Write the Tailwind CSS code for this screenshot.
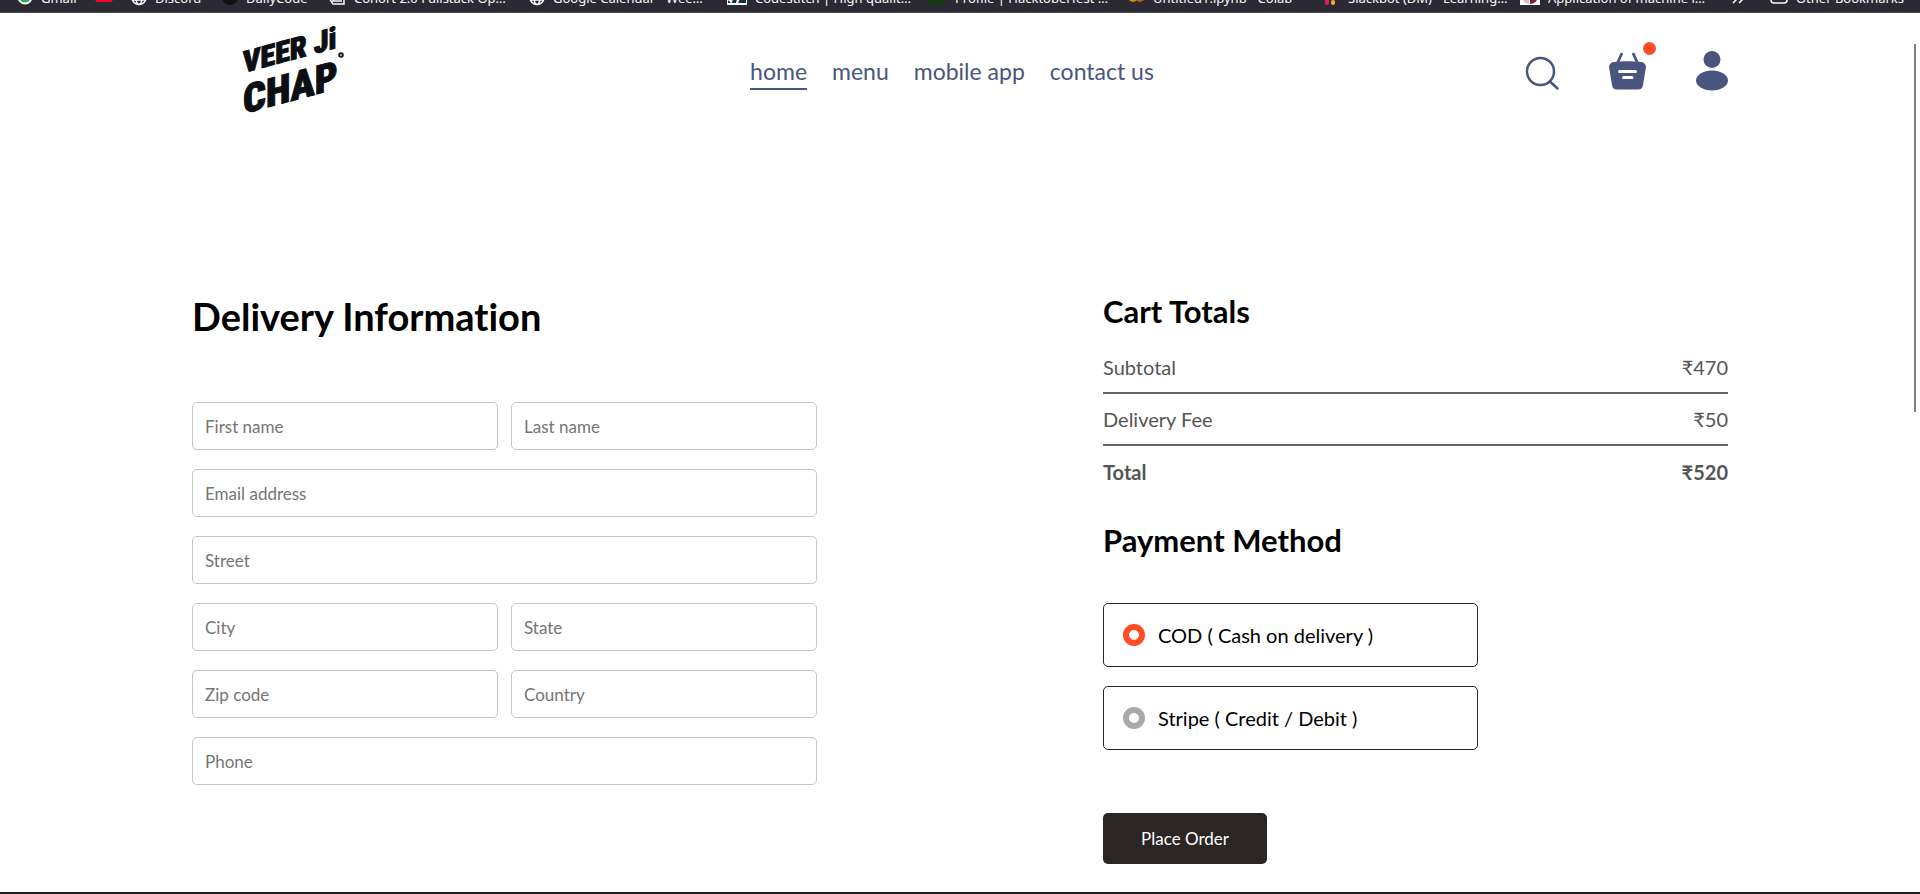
<!DOCTYPE html>
<html lang="en">
<head>
<meta charset="utf-8">
<meta name="viewport" content="width=device-width, initial-scale=1">
<title>Veer Ji Chap - Place Order</title>
<script src="https://cdn.jsdelivr.net/npm/@tailwindcss/browser@4"></script>
</head>
<body class="relative overflow-x-hidden bg-white font-[Lato,'Noto_Sans',sans-serif] text-black [font-variant-ligatures:none]">

<!-- Bookmarks strip -->
<nav aria-label="Bookmarks" class="flex h-[13px] items-end overflow-hidden border-b border-[#4a4953] bg-[#2b2a33] pr-4 pb-1.5 pl-[17px] font-['Noto_Sans',sans-serif] text-[13px] leading-4 whitespace-nowrap text-[#fbfbfe]">
  <a href="#" class="flex w-[78px] shrink-0 gap-2"><svg class="size-4 shrink-0" viewBox="0 0 16 16"><circle cx="8" cy="7" r="7.5" fill="#fff"/><circle cx="8" cy="7" r="5.5" fill="#34a853"/></svg>Gmail</a>
  <a href="#" aria-label="YouTube" class="flex w-9 shrink-0"><svg class="h-4 w-[18px]" viewBox="0 0 18 16"><rect y="1" width="18" height="11" rx="3" fill="#ff0033"/></svg></a>
  <a href="#" class="flex w-[91px] shrink-0 gap-2"><svg class="size-4 shrink-0" viewBox="0 0 16 16" fill="none" stroke="#fbfbfe" stroke-width="1.5"><circle cx="8" cy="7.5" r="7"/><ellipse cx="8" cy="7.5" rx="3" ry="7"/><path d="M1 5h14M1 10h14"/></svg>Discord</a>
  <a href="#" class="flex w-[106px] shrink-0 gap-2"><svg class="size-4 shrink-0" viewBox="0 0 16 16"><circle cx="8" cy="7" r="8" fill="#111"/></svg>DailyCode</a>
  <a href="#" class="flex w-[201px] shrink-0 gap-2 pr-5"><svg class="h-4 w-[18px] shrink-0" viewBox="0 0 18 16" fill="none" stroke="#fbfbfe" stroke-width="1.5"><path d="M1 8l4 6h11V2H5v9h9M7 8h5"/></svg><span class="truncate">Cohort 2.0 Fullstack Open</span></a>
  <a href="#" class="flex w-[198px] shrink-0 gap-2 pr-5"><svg class="size-4 shrink-0" viewBox="0 0 16 16" fill="none" stroke="#fbfbfe" stroke-width="1.5"><circle cx="8" cy="7.5" r="7"/><ellipse cx="8" cy="7.5" rx="3" ry="7"/><path d="M1 5h14M1 10h14"/></svg><span class="truncate">Google Calendar - Week of</span></a>
  <a href="#" class="flex w-[200px] shrink-0 gap-2 pr-4"><svg class="h-4 w-5 shrink-0" viewBox="0 0 20 16"><path fill="#fff" d="M0 0h20v15H0z"/><path fill="#123047" d="M8 0h11v13H5zM1 10l3 3H1z"/><path fill="#fff" d="M10 9h3l-2 4H9z"/></svg><span class="truncate">Codestitch | High quality web</span></a>
  <a href="#" class="flex w-[202px] shrink-0 gap-2 pr-4"><svg class="h-4 w-5 shrink-0" viewBox="0 0 20 16"><path fill="#183717" d="M0 0h19v15H0z"/></svg><span class="truncate">Profile | Hacktoberfest 2024</span></a>
  <a href="#" class="flex w-[195px] shrink-0 gap-2 pr-4"><svg class="size-4 shrink-0" viewBox="0 0 16 16" fill="none" stroke-width="3"><circle cx="4" cy="7" r="3.5" stroke="#c98a1a"/><circle cx="11" cy="7" r="3.5" stroke="#b8651a"/></svg><span class="truncate">Untitled1.ipynb - Colab</span></a>
  <a href="#" class="flex w-[196px] shrink-0 gap-2 pr-3"><svg class="size-4 shrink-0" viewBox="0 0 16 16"><rect x="1" width="4" height="15" rx="2" fill="#e01e5a"/><rect x="7" y="10" width="4" height="5" rx="2" fill="#ecb22e"/></svg><span class="truncate">Slackbot (DM) - Learning hub</span></a>
  <a href="#" class="flex w-[198px] shrink-0 gap-2 pr-3"><svg class="h-4 w-5 shrink-0" viewBox="0 0 20 16"><path fill="#fff" d="M0 0h20v15H0z"/><path fill="#7a1f3d" d="M10 6h8a8 8 0 0 1-8 8z"/><path fill="#d8c3cc" d="M9 6v8a8 8 0 0 1-7-6z"/></svg><span class="truncate">Application of machine learning</span></a>
  <button type="button" aria-label="More bookmarks" class="ml-3"><svg class="h-4 w-4" viewBox="0 0 16 16" fill="none" stroke="#fbfbfe" stroke-width="1.5"><path d="M3 5l4 4-4 4M9 5l4 4-4 4"/></svg></button>
  <a href="#" class="ml-auto flex shrink-0 gap-2"><svg class="h-4 w-[18px] shrink-0" viewBox="0 0 18 16" fill="none" stroke="#fbfbfe" stroke-width="1.5"><path d="M1 1v9a3 3 0 0 0 3 3h10a3 3 0 0 0 3-3V1"/></svg>Other Bookmarks</a>
</nav>

<header class="flex h-[116px] items-center justify-between px-[10%]">
  <a href="#" aria-label="Veer Ji Chap" class="w-[187px]">
    <svg class="h-[116px] w-[187px]" viewBox="0 0 187 116" fill="#0b0f14" stroke="#0b0f14" font-family="'Roboto Condensed','Open Sans Condensed',Roboto,sans-serif" font-weight="900">
      <g transform="translate(51 0) skewY(-15)">
        <text x="0" y="60" font-size="30" stroke-width="1">VEER Ji</text>
        <text x="0" y="101" font-size="40" stroke-width="1">CHAP</text>
      </g>
      <circle cx="149" cy="42" r="2" fill="#8aa0b5" stroke-width="1.5"/>
    </svg>
  </a>
  <nav aria-label="Main" class="flex gap-[25px] pt-1 text-[23px] leading-[30px] text-[#49557e]">
    <a href="#" class="border-b-2 border-[#49557e] pb-0.5">home</a>
    <a href="#">menu</a>
    <a href="#">mobile app</a>
    <a href="#">contact us</a>
  </nav>
  <div class="flex items-center gap-[50px] text-[#49557e]">
    <button type="button" aria-label="Search" class="pt-1"><svg class="size-[34px]" viewBox="0 0 34 34" fill="none" stroke="currentColor" stroke-width="2.5" stroke-linecap="round"><circle cx="15.5" cy="15.5" r="13.5"/><path d="M25 25.5l7.5 7"/></svg></button>
    <a href="#" aria-label="Cart" class="relative"><svg class="h-[38px] w-[37px]" viewBox="0 0 37 38"><path fill="currentColor" d="M5 10C12 9 25 9 32 10a5 5 0 0 1 5 5l-3 18a5 5 0 0 1-5 4.500H8A5 5 0 0 1 3 33L0 15a5 5 0 0 1 5-5z"/><path d="M8.500 11l4.500-10M28.500 11l-4.500-10" stroke="currentColor" stroke-width="2.8"/><path d="M10.500 19.500h16M14.500 25.500h8.500" stroke="#fff" stroke-width="3" stroke-linecap="round"/></svg><span class="absolute -top-2.5 -right-2.5 size-[13px] rounded-full bg-[#ff4c24]"></span></a>
    <button type="button" aria-label="Account"><svg class="h-10 w-8" viewBox="0 0 32 40" fill="currentColor"><circle cx="16" cy="8.5" r="8.5"/><ellipse cx="16" cy="29.5" rx="16" ry="10"/></svg></button>
  </div>
</header>

<main class="px-[10%] pt-[164px] pb-7">
  <form class="flex items-start justify-between" onsubmit="return false">
    <section class="w-[41%] max-w-[625px]">
      <h1 class="text-[38px] leading-[46px] font-bold">Delivery Information</h1>
      <div class="mt-[63px] grid grid-cols-2 gap-x-[13px] gap-y-[19px] text-[17px] text-[#757575]">
        <input aria-label="First name" placeholder="First name" class="h-12 w-full min-w-0 rounded-[5px] border border-[#c5c5c5] px-3 placeholder:text-[#757575]">
        <input aria-label="Last name" placeholder="Last name" class="h-12 w-full min-w-0 rounded-[5px] border border-[#c5c5c5] px-3 placeholder:text-[#757575]">
        <input type="email" aria-label="Email address" placeholder="Email address" class="col-span-2 h-12 w-full rounded-[5px] border border-[#c5c5c5] px-3 placeholder:text-[#757575]">
        <input aria-label="Street" placeholder="Street" class="col-span-2 h-12 w-full rounded-[5px] border border-[#c5c5c5] px-3 placeholder:text-[#757575]">
        <input aria-label="City" placeholder="City" class="h-12 w-full min-w-0 rounded-[5px] border border-[#c5c5c5] px-3 placeholder:text-[#757575]">
        <input aria-label="State" placeholder="State" class="h-12 w-full min-w-0 rounded-[5px] border border-[#c5c5c5] px-3 placeholder:text-[#757575]">
        <input aria-label="Zip code" placeholder="Zip code" class="h-12 w-full min-w-0 rounded-[5px] border border-[#c5c5c5] px-3 placeholder:text-[#757575]">
        <input aria-label="Country" placeholder="Country" class="h-12 w-full min-w-0 rounded-[5px] border border-[#c5c5c5] px-3 placeholder:text-[#757575]">
        <input type="tel" aria-label="Phone" placeholder="Phone" class="col-span-2 h-12 w-full rounded-[5px] border border-[#c5c5c5] px-3 placeholder:text-[#757575]">
      </div>
    </section>

    <section class="w-[41%] max-w-[625px]">
      <h2 class="text-[31px] leading-9 font-bold">Cart Totals</h2>
      <table class="mt-[13px] w-full border-separate border-spacing-0 text-[20px] leading-6 text-[#555]">
        <tbody>
          <tr class="h-[52px]"><th scope="row" class="border-b-2 border-[#666] text-left font-normal">Subtotal</th><td class="border-b-2 border-[#666] text-right">₹470</td></tr>
          <tr class="h-[52px]"><th scope="row" class="border-b-2 border-[#666] text-left font-normal">Delivery Fee</th><td class="border-b-2 border-[#666] text-right">₹50</td></tr>
          <tr class="h-[52px] font-bold"><th scope="row" class="text-left">Total</th><td class="text-right">₹520</td></tr>
        </tbody>
      </table>
      <h2 class="mt-6 text-[31px] leading-9 font-bold">Payment Method</h2>
      <div class="mt-[45px] flex w-3/5 flex-col gap-[19px] text-[20px]">
        <label class="flex h-16 items-center gap-[13px] rounded-[5px] border border-[#262626] px-[19px]"><input type="radio" name="payment" checked class="size-[22px] shrink-0 appearance-none rounded-full border-[6px] border-[#a9a9a9] checked:border-[#ff4c24]">COD ( Cash on delivery )</label>
        <label class="flex h-16 items-center gap-[13px] rounded-[5px] border border-[#262626] px-[19px]"><input type="radio" name="payment" class="size-[22px] shrink-0 appearance-none rounded-full border-[6px] border-[#a9a9a9] checked:border-[#ff4c24]">Stripe ( Credit / Debit )</label>
      </div>
      <button type="submit" class="mt-[63px] h-[51px] w-[164px] rounded-[5px] bg-[#2b2525] text-[17px] text-white">Place Order</button>
    </section>
  </form>
</main>

<footer class="h-0.5 bg-[#202022]"></footer>

<!-- Scroll thumb -->
<div class="absolute top-11 right-1 h-[368px] w-0.5 bg-[#808080]"></div>
</body>
</html>
